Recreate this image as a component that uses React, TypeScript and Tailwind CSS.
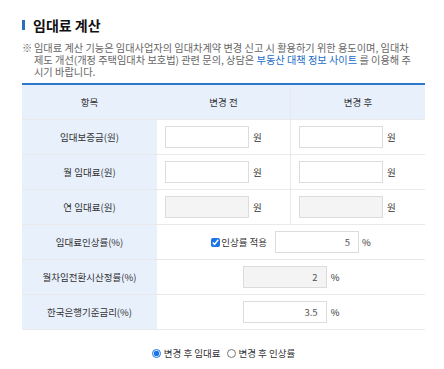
import React from "react";

const font = { fontFamily: '"Noto Sans CJK KR", "Noto Sans", sans-serif' };

function Inp({ value = "", gray = false, w = "w-[84px]" }: { value?: string; gray?: boolean; w?: string }) {
  return (
    <input
      readOnly
      value={value}
      className={`${w} h-[22px] border border-[#dcdcdc] ${gray ? "bg-[#f4f4f4]" : "bg-white"} text-right pr-[8px] text-[9.5px] text-[#555] outline-none`}
    />
  );
}

function LabelCell({ children }: { children: React.ReactNode }) {
  return (
    <div className="h-[35px] bg-[#e8f0fc] flex items-center justify-center text-[9.5px] text-[#333] border-b border-[#e9e9e9]">
      {children}
    </div>
  );
}

function WonCell({ gray = false, border = false }: { gray?: boolean; border?: boolean }) {
  return (
    <div className={`h-[35px] flex items-center pl-[8px] gap-[4px] border-b border-[#e9e9e9] ${border ? "border-r border-r-[#e9e9e9]" : ""}`}>
      <Inp gray={gray} />
      <span className="text-[9.5px] text-[#333]">원</span>
    </div>
  );
}

export default function App() {
  return (
    <div className="w-[444px] h-[369px] bg-white pl-[22px] pt-[17px]" style={font}>
      <div className="w-[403px]">
        <div className="flex items-center gap-[8px] h-[16px]">
          <span className="w-[3px] h-[10px] bg-[#2a6fc0]" />
          <h1 className="text-[14px] font-bold text-[#111] leading-none">임대료 계산</h1>
        </div>
        <div className="mt-[9px] flex text-[10.2px] leading-[12px] text-[#666] whitespace-nowrap">
          <span className="w-[12px] shrink-0">※</span>
          <p>
            임대료 계산 기능은 임대사업자의 임대차계약 변경 신고 시 활용하기 위한 용도이며, 임대차
            <br />
            제도 개선(개정 주택임대차 보호법) 관련 문의, 상담은 <span className="text-[#1a6cc8]">부동산 대책 정보 사이트</span> 를 이용해 주
            <br />
            시기 바랍니다.
          </p>
        </div>
        <div className="mt-[5px] border-t-2 border-[#2b78cc] grid grid-cols-[135px_134px_134px]">
          <LabelCell>항목</LabelCell>
          <div className="h-[35px] bg-[#e8f0fc] flex items-center justify-center text-[9.5px] text-[#333] border-b border-r border-[#e9e9e9]">변경 전</div>
          <div className="h-[35px] bg-[#e8f0fc] flex items-center justify-center text-[9.5px] text-[#333] border-b border-[#e9e9e9]">변경 후</div>

          <LabelCell>임대보증금(원)</LabelCell>
          <WonCell border />
          <WonCell />

          <LabelCell>월 임대료(원)</LabelCell>
          <WonCell border />
          <WonCell />

          <LabelCell>연 임대료(원)</LabelCell>
          <WonCell gray border />
          <WonCell gray />

          <LabelCell>임대료인상률(%)</LabelCell>
          <div className="col-span-2 h-[35px] flex items-center justify-center border-b border-[#e9e9e9]">
            <label className="flex items-center text-[9.5px] text-[#333]">
              <input type="checkbox" defaultChecked className="w-[9px] h-[9px] m-0 accent-[#1a73e8]" />
              <span className="ml-[1px]">인상률 적용</span>
            </label>
            <div className="ml-[8px] flex items-center gap-[3px]">
              <Inp value="5" />
              <span className="text-[9.5px] text-[#333]">%</span>
            </div>
          </div>

          <LabelCell>월차임전환시산정률(%)</LabelCell>
          <div className="col-span-2 h-[35px] flex items-center justify-center gap-[4px] border-b border-[#e9e9e9]">
            <Inp value="2" gray />
            <span className="text-[9.5px] text-[#333]">%</span>
          </div>

          <LabelCell>한국은행기준금리(%)</LabelCell>
          <div className="col-span-2 h-[35px] flex items-center justify-center gap-[4px] border-b border-[#e9e9e9]">
            <Inp value="3.5" />
            <span className="text-[9.5px] text-[#333]">%</span>
          </div>
        </div>
        <div className="mt-[16px] flex items-center justify-center text-[9.5px] text-[#333]">
          <label className="flex items-center">
            <input type="radio" name="r" defaultChecked className="w-[9px] h-[9px] m-0 accent-[#1a73e8]" />
            <span className="ml-[3px]">변경 후 임대료</span>
          </label>
          <label className="flex items-center ml-[6px]">
            <input type="radio" name="r" className="w-[9px] h-[9px] m-0 accent-[#1a73e8]" />
            <span className="ml-[3px]">변경 후 인상률</span>
          </label>
        </div>
      </div>
    </div>
  );
}
